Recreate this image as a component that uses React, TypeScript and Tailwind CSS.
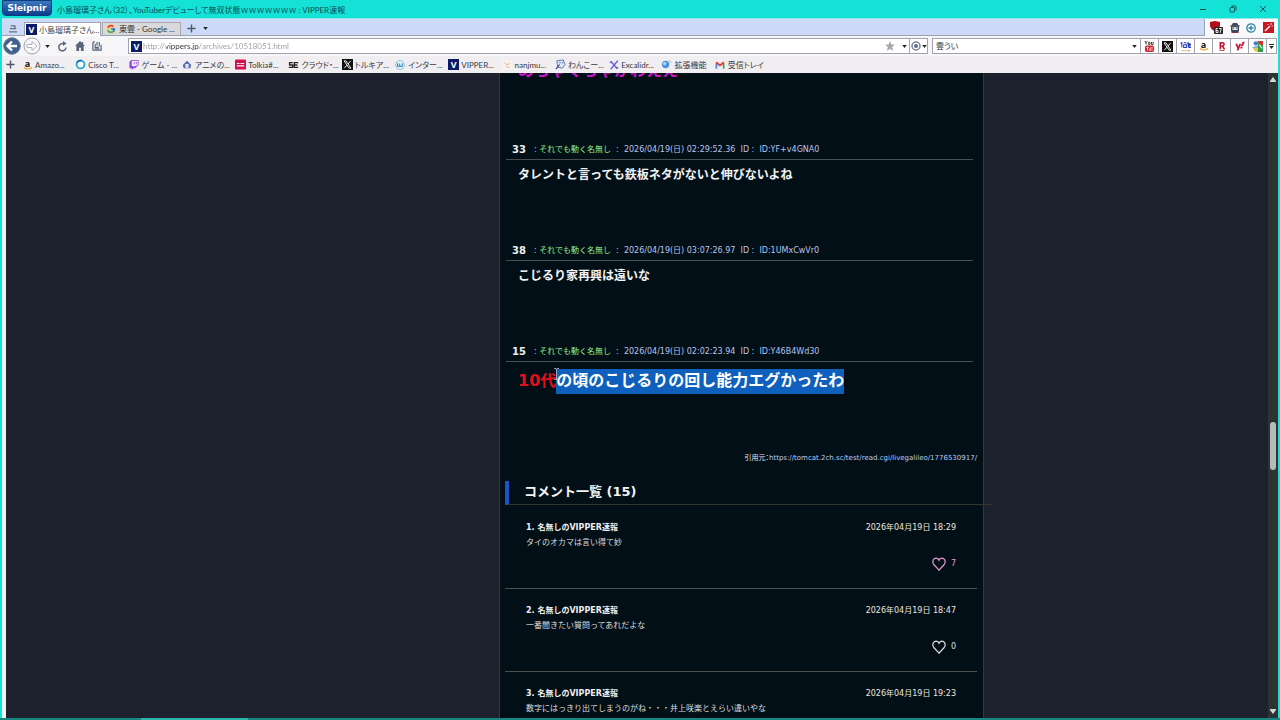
import React from "react";
import { FaTwitch, FaYahoo } from "react-icons/fa";
import { FcGoogle } from "react-icons/fc";

const Caret = () => (
  <svg viewBox="0 0 6 4" className="h-[3px] w-[5px] shrink-0" aria-hidden="true">
    <path d="M0 0h6L3 4z" fill="#222" />
  </svg>
);

const VIcon = ({ className = "" }: { className?: string }) => (
  <span
    aria-hidden="true"
    className={`flex size-[11px] shrink-0 items-center justify-center bg-[#0b1a66] font-['Noto_Sans'] text-[9px] leading-none font-bold text-white ${className}`}
  >
    V
  </span>
);

const XIcon = () => (
  <svg viewBox="0 0 12 12" className="size-[11px] shrink-0" aria-hidden="true">
    <rect width="12" height="12" fill="#111" />
    <path d="M2.3 2h2l5.4 8h-2z" fill="none" stroke="#fff" strokeWidth="1" />
    <path d="M9.5 2 6.6 5.4M5.5 6.7 2.5 10" stroke="#fff" strokeWidth="1" />
  </svg>
);

const AmazonIcon = () => (
  <span className="flex w-[10px] flex-col items-center font-['Open_Sans'] text-[9px] leading-[7px] font-bold text-[#111]" aria-hidden="true">
    a
    <svg viewBox="0 0 10 3" className="h-[3px] w-[10px]">
      <path d="M1 .5q4 3 8 0" fill="none" stroke="#f0a022" strokeWidth="1.2" />
    </svg>
  </span>
);

const PlusIcon = () => (
  <svg viewBox="0 0 10 10" className="size-[9px] shrink-0" aria-hidden="true">
    <path d="M5 .5v9M.5 5h9" stroke="#4c586b" strokeWidth="1.6" />
  </svg>
);

const bookmarks: { label: string; icon: React.ReactNode }[] = [
  { label: "Amazo...", icon: <AmazonIcon /> },
  {
    label: "Cisco T...",
    icon: (
      <svg viewBox="0 0 12 12" className="size-[11px]">
        <circle cx="6" cy="6" r="4.3" fill="#fff" stroke="#19a9d2" strokeWidth="1.9" />
        <path d="M2 4.2A4.4 4.4 0 0 1 7 1.8" fill="none" stroke="#1567b8" strokeWidth="1.8" />
      </svg>
    ),
  },
  { label: "ゲーム - ...", icon: <FaTwitch size={10} color="#8b43e6" /> },
  {
    label: "アニメの...",
    icon: (
      <svg viewBox="0 0 12 12" className="size-[10px]">
        <path d="M1 6 6 1l5 5-1 4H2z" fill="#4c68b7" />
        <circle cx="6" cy="7" r="2.6" fill="#e9eefc" />
        <path d="M4 7h1M7 7h1" stroke="#345" />
      </svg>
    ),
  },
  {
    label: "Tolkia#...",
    icon: (
      <svg viewBox="0 0 12 12" className="size-[11px]">
        <rect y=".5" width="12" height="11" rx="1" fill="#d5104f" />
        <path d="M2 5h3M6 5h4M2 7.5h8" stroke="#fff" strokeWidth="1.1" />
      </svg>
    ),
  },
  {
    label: "クラウド・...",
    icon: (
      <svg viewBox="0 0 14 10" className="h-[8px] w-[11px]">
        <path d="M6 2H2v3h4v3H1M13 2H8v6h5M8 5h4" fill="none" stroke="#262626" strokeWidth="1.7" />
      </svg>
    ),
  },
  { label: "トルキア...", icon: <XIcon /> },
  {
    label: "インター...",
    icon: (
      <svg viewBox="0 0 12 12" className="size-[10px]">
        <circle cx="6" cy="6" r="5.2" fill="#eaf5fb" stroke="#6fb4d8" />
        <path d="M3 4v3.6h2.6V4M5.8 7.6h2.9V4" fill="none" stroke="#1c7fb8" strokeWidth="1.2" />
      </svg>
    ),
  },
  { label: "VIPPER...", icon: <VIcon /> },
  {
    label: "nanjmu...",
    icon: (
      <svg viewBox="0 0 12 12" className="size-[10px]">
        <rect width="12" height="12" fill="#f8f1ec" />
        <path d="M3 3l3 3 3-2M5 8l4 1" fill="none" stroke="#e2a48c" />
      </svg>
    ),
  },
  {
    label: "わんこー...",
    icon: (
      <svg viewBox="0 0 12 12" className="size-[11px]">
        <path d="M2 2l7-1 2 5-3 4-5-1z" fill="#dce7f8" stroke="#5573ab" />
        <path d="M1 11l4-5M5 4h1M8 4h1" stroke="#29467f" strokeWidth="1.2" />
      </svg>
    ),
  },
  {
    label: "Excalidr...",
    icon: (
      <svg viewBox="0 0 12 12" className="size-[10px]">
        <path d="M2 1.5l8 9M10.5 1 2 11M1 3l3-1M8 10l3-1" stroke="#6a61d6" strokeWidth="1.7" />
      </svg>
    ),
  },
  {
    label: "拡張機能",
    icon: (
      <svg viewBox="0 0 12 12" className="size-[11px]">
        <circle cx="5" cy="6" r="4" fill="#4d93d9" />
        <circle cx="4" cy="5" r="1.8" fill="#b7dbf7" />
        <path d="M8 1.5q3 0 3 3" fill="none" stroke="#b8bcc4" />
      </svg>
    ),
  },
  {
    label: "受信トレイ",
    icon: (
      <svg viewBox="0 0 12 10" className="h-[8px] w-[10px]" fill="none" strokeWidth="2.2">
        <path d="M1.5 3v6.500" stroke="#4a80e8" />
        <path d="M10.500 3v6.500" stroke="#37a455" />
        <path d="M1.200 1.500 6 5.500l4.800-4" stroke="#dc3b30" />
      </svg>
    ),
  },
];

const searchEngines: { label: string; icon: React.ReactNode }[] = [
  {
    label: "YouTube",
    icon: (
      <svg viewBox="0 0 12 12" className="size-[11px]">
        <path d="M1 0l1.3 2.2V4M3.7 0 2.4 2M5 1.5h1.6v2.2H5zM8.2 1v2.8h1.8V1" fill="none" stroke="#222" strokeWidth=".9" />
        <rect x="1" y="5" width="10" height="7" rx="2" fill="#cf2b35" />
        <path d="M2.5 7H5M3.8 7v3.4M6.2 8v2.2h1.4V6.6M9 7.5h1M9 10h1.2" fill="none" stroke="#fff" strokeWidth=".8" />
      </svg>
    ),
  },
  { label: "X", icon: <XIcon /> },
  {
    label: "価格.com",
    icon: (
      <svg viewBox="0 0 12 12" className="size-[11px]">
        <path d="M2 1v6M.5 2.500h2M4 2h3M4 4h3v3H4zM9 1v6M7.500 3h4M10 4h2v3h-2z" fill="none" stroke="#203bb4" strokeWidth="1.1" />
        <path d="M2 10.500h2M5 10.500h2M8 10.500h3" stroke="#e5a860" strokeWidth="1.5" />
      </svg>
    ),
  },
  { label: "Amazon", icon: <AmazonIcon /> },
  {
    label: "楽天",
    icon: (
      <svg viewBox="0 0 12 12" className="size-[10px]">
        <path d="M4 10V2h2.500a2 2 0 0 1 0 4H4M6.500 6 9 10" fill="none" stroke="#c1122b" strokeWidth="1.9" />
        <path d="M3 11.500h6" stroke="#c1122b" />
      </svg>
    ),
  },
  { label: "Yahoo!", icon: <FaYahoo size={10} color="#cc1038" /> },
  {
    label: "Google マップ",
    icon: (
      <svg viewBox="0 0 12 12" className="size-[11px]">
        <path d="M6 0h6v12H6z" fill="#2b9c4c" />
        <path d="M7 0h5v5L7 3z" fill="#d8352f" />
        <circle cx="4" cy="2.500" r="2.300" fill="#3f7fc6" />
        <path d="M0 7l5-2 2 3-3 2z" fill="#78aee0" />
        <circle cx="4.500" cy="9.500" r="2.300" fill="#f0c436" />
        <path d="M8 4l3 4" stroke="#eef4f9" strokeWidth="1.200" />
      </svg>
    ),
  },
];

const posts = [
  { no: 33, time: "2026/04/19(日) 02:29:52.36", id: "YF+v4GNA0", body: "タレントと言っても鉄板ネタがないと伸びないよね" },
  { no: 38, time: "2026/04/19(日) 03:07:26.97", id: "1UMxCwVr0", body: "こじるり家再興は遠いな" },
];

const comments = [
  { no: 1, date: "2026年04月19日 18:29", body: "タイのオカマは言い得て妙", likes: 7 },
  { no: 2, date: "2026年04月19日 18:47", body: "一番聞きたい質問ってあれだよな", likes: 0 },
  { no: 3, date: "2026年04月19日 19:23", body: "数字にはっきり出てしまうのがね・・・井上咲楽とえらい違いやな", likes: null },
];

function PostHeader({ no, time, id }: { no: number; time: string; id: string }) {
  return (
    <header className="flex h-5 items-center border-b border-[#4a4d4f] pl-1.5 text-[8px] leading-[13px] whitespace-pre text-[#b9c4ec]">
      <b className="w-[22px] text-[10px] text-[#efefef]">{no}</b>
      <span>: </span>
      <span className="text-[#8ff08a]">それでも動く名無し</span>
      <span>{"  :  "}</span>
      <span>
        {time}
        {"  "}ID :{"  "}ID:{id}
      </span>
    </header>
  );
}

function TitleBar() {
  return (
    <div className="flex h-[18px] shrink-0 items-center">
      <button className="mb-0.5 h-4 w-[50px] rounded-b-sm border border-[#0c3c80] bg-linear-to-b from-[#3b78c0] to-[#0d3f8c] font-['DejaVu_Sans'] text-[9px] leading-[13px] font-bold text-white">
        Sleipnir
      </button>
      <h1 className="ml-[5px] flex-1 truncate pt-px text-[8px] text-[#0b4b52]">
        小島瑠璃子さん（32）、YouTuberデビューして無双状態ｗｗｗｗｗｗｗ : VIPPER速報
      </h1>
      <div className="flex w-[90px] items-center">
        <button aria-label="最小化" className="flex w-[30px] justify-center">
          <svg viewBox="0 0 8 8" className="size-2">
            <path d="M1 4.500h6" stroke="#154c50" />
          </svg>
        </button>
        <button aria-label="元に戻す" className="flex w-[30px] justify-center">
          <svg viewBox="0 0 8 8" className="size-2" fill="none" stroke="#154c50">
            <rect x="1" y="2.500" width="4.500" height="4.500" rx="1" />
            <path d="M2.500 1h3.300Q7 1 7 2.200v3.300" />
          </svg>
        </button>
        <button aria-label="閉じる" className="flex w-[30px] justify-center">
          <svg viewBox="0 0 8 8" className="size-2">
            <path d="M1 1l6 6M7 1 1 7" stroke="#154c50" />
          </svg>
        </button>
      </div>
    </div>
  );
}

function TabBar() {
  return (
    <div className="flex h-[18px] shrink-0 border-t border-[#8fe9e4] bg-[#ccdaf7]">
      <div className="flex flex-1 items-end border-r border-b border-[#9ba3b3]">
        <button aria-label="タブ一覧" className="flex h-[13px] w-[22px] items-center justify-center">
          <svg viewBox="0 0 12 10" className="h-[8px] w-[10px]">
            <path d="M3 1h6M2 4.500h8M1 8.500h10M9 1l-1 3" fill="none" stroke="#66707f" strokeWidth="1.500" />
          </svg>
        </button>
        <button className="-mb-px flex h-[14px] w-[77px] items-center gap-[2px] overflow-hidden border border-b-0 border-[#9ba3b3] bg-white pl-px text-[8px] whitespace-nowrap text-[#444]">
          <VIcon />
          小島瑠璃子さん...
        </button>
        <button className="ml-px flex h-[13px] w-[79px] items-center gap-[3px] border border-b-0 border-[#aaa] bg-[#d9d9db] pl-[3px] text-[8px] whitespace-nowrap text-[#333]">
          <FcGoogle size={10} className="shrink-0" />
          東雲 - Google ...
        </button>
        <button aria-label="新しいタブ" className="ml-[3px] flex h-[13px] w-[14px] items-center justify-center">
          <PlusIcon />
        </button>
        <button aria-label="タブメニュー" className="flex h-[13px] w-[14px] items-center justify-center">
          <Caret />
        </button>
      </div>
      <div className="flex w-[73px] items-center justify-between bg-[#f9f9fb] pr-1 pl-[5px]">
        <button aria-label="ブロッカー 67" className="size-[13px]">
          <svg viewBox="0 0 13 13">
            <path d="M0 1l5-1 5 1v4q-1 4-5 5-4-1-5-5z" fill="#b10e1c" />
            <rect x="4" y="6" width="9" height="7" rx="1" fill="#222" />
            <path d="M7.800 7.500H6v4h2v-2H6M9 7.500h2.300L10 12" fill="none" stroke="#fff" strokeWidth=".9" />
          </svg>
        </button>
        <button aria-label="拡張機能" className="size-[10px]">
          <svg viewBox="0 0 10 10">
            <path d="M3 0h4l2 3v5L7.500 10h-5L1 8V3z" fill="#3f4655" />
            <path d="M0 3h10" stroke="#596273" />
            <path d="M2.500 4h5v3h-5z" fill="#dfe8ee" />
            <path d="M3 5h1.200M5.800 5H7" stroke="#33465c" />
            <path d="M1.500 9.500h2M6.500 9.500h2" stroke="#b52a31" />
          </svg>
        </button>
        <button aria-label="追加" className="size-[10px]">
          <svg viewBox="0 0 10 10" fill="none" stroke="#2d83a8">
            <circle cx="5" cy="5" r="4.200" strokeWidth="1.300" />
            <path d="M5 2.500v5M2.500 5h5" strokeWidth="1.300" />
          </svg>
        </button>
        <button aria-label="マジック" className="size-[11px]">
          <svg viewBox="0 0 11 11">
            <rect width="11" height="11" fill="#c51820" />
            <path d="M2 9l5-5" stroke="#fff" strokeWidth="1.400" />
            <path d="M8 1v2M10 4H8.500M4.500 2.500h1" stroke="#fff" strokeWidth=".8" />
          </svg>
        </button>
      </div>
    </div>
  );
}

function AddressRow() {
  return (
    <div className="flex h-5 shrink-0 items-center bg-[#f6f6f9] pr-px">
      <nav className="flex w-[126px] items-center text-[#596579]">
        <button aria-label="戻る" className="ml-px size-[18px]">
          <svg viewBox="0 0 18 18">
            <circle cx="9" cy="9" r="8.300" fill="#41608f" stroke="#687891" />
            <path d="M14 9H5M9 4.500 4.500 9 9 13.500" fill="none" stroke="#fff" strokeWidth="2.400" />
          </svg>
        </button>
        <button aria-label="進む" className="ml-[2px] size-[18px]">
          <svg viewBox="0 0 18 18">
            <circle cx="9" cy="9" r="8" fill="#f7f7f9" stroke="#a0a4aa" />
            <path d="M4 7.500h5V4.500L14 9l-5 4.500v-3H4z" fill="#fff" stroke="#b0b3b8" />
          </svg>
        </button>
        <button aria-label="履歴" className="ml-px flex w-[10px] justify-center">
          <Caret />
        </button>
        <button aria-label="再読み込み" className="ml-[5px] size-[11px]">
          <svg viewBox="0 0 11 11" fill="none" stroke="currentColor" strokeWidth="1.500">
            <path d="M9 6.500A3.600 3.600 0 1 1 7 3" />
            <path d="M6 0v5L9.500 2.500z" fill="currentColor" stroke="none" />
          </svg>
        </button>
        <button aria-label="ホーム" className="ml-[7px] size-[10px]">
          <svg viewBox="0 0 11 11" fill="currentColor">
            <path d="M5.500 0 0 5.500h1.500V11h3V7.500h2V11h3V5.500H11L9 3.500V1H7.500v1z" />
          </svg>
        </button>
        <button aria-label="保存" className="ml-[7px] size-[10px]">
          <svg viewBox="0 0 11 11" fill="none" stroke="currentColor" strokeWidth="1.300">
            <path d="M1 1v9h9V4M1 1h2M3.500 3v4h4M5.500 1v4M8 1v5M3 8.500h5" />
          </svg>
        </button>
      </nav>
      <form className="flex h-4 flex-1 items-center border border-[#a3a3ad] bg-white" onSubmit={(e) => e.preventDefault()}>
        <VIcon className="ml-[2px]" />
        <input
          aria-label="アドレス"
          defaultValue="http://vippers.jp/archives/10518051.html"
          className="ml-px min-w-0 flex-1 bg-clip-text text-[8px] text-transparent outline-none [background-image:linear-gradient(to_right,#9a9aa2_23px,#333_23px,#333_56px,#9a9aa2_56px)]"
        />
        <button aria-label="お気に入り" className="mr-1 size-[10px]">
          <svg viewBox="0 0 12 12">
            <path d="M6 0l1.600 4.300L12 4.500 8.600 7.300 9.800 12 6 9.300 2.200 12l1.200-4.700L0 4.500l4.400-.2z" fill="#a6a6ad" />
          </svg>
        </button>
        <button aria-label="候補" className="flex w-[10px] justify-center">
          <Caret />
        </button>
        <button aria-label="エンジン切替" className="flex h-full w-[18px] items-center justify-center gap-px border-l border-[#a3a3ad]">
          <svg viewBox="0 0 10 10" className="size-[10px] shrink-0" fill="none">
            <circle cx="5" cy="5" r="4" stroke="#7b8293" strokeWidth="1.500" />
            <circle cx="5" cy="5" r="2" fill="#596d93" />
          </svg>
          <Caret />
        </button>
      </form>
      <form className="ml-1 flex h-4 w-[345px] items-center border border-[#a3a3ad] bg-white" onSubmit={(e) => e.preventDefault()}>
        <input aria-label="検索" defaultValue="雲うい" className="min-w-0 flex-1 pl-[3px] text-[8px] text-[#333] outline-none" />
        <button aria-label="検索履歴" className="flex w-[11px] justify-center">
          <Caret />
        </button>
        {searchEngines.map((e) => (
          <button key={e.label} type="button" aria-label={e.label} className="flex h-full w-[18px] items-center justify-center border-l border-[#a3a3ad]">
            {e.icon}
          </button>
        ))}
        <button aria-label="その他" className="flex h-full w-[10px] flex-col items-center justify-center gap-px border-l border-[#a3a3ad]">
          <span className="h-px w-[5px] bg-[#222]" />
          <Caret />
        </button>
      </form>
    </div>
  );
}

function BookmarkBar() {
  return (
    <nav className="flex h-[17px] shrink-0 items-center overflow-hidden bg-[#f0eef1] pl-1">
      <button aria-label="ブックマークを追加" className="w-4">
        <PlusIcon />
      </button>
      <ul className="grid w-[746px] grid-cols-14">
        {bookmarks.map((b) => (
          <li key={b.label}>
            <a href="#" className="flex items-center gap-[2px] text-[8px] leading-3 whitespace-nowrap text-[#3a3a3e]">
              <span aria-hidden="true" className="flex w-[11px] shrink-0 justify-center">
                {b.icon}
              </span>
              {b.label}
            </a>
          </li>
        ))}
      </ul>
    </nav>
  );
}

function Article() {
  return (
    <main className="border-x border-[#34383e] bg-[#020f17] px-1.5 font-['DejaVu_Sans','Noto_Sans_CJK_JP',sans-serif]">
      <section className="mr-1">
        <p className="-mt-[15px] mb-[57px] pl-3 text-[16px] leading-[25px] font-bold text-[#c716c7]">めちゃくちゃかわええ</p>
        {posts.map((p) => (
          <article key={p.no} className="h-[101px]">
            <PostHeader no={p.no} time={p.time} id={p.id} />
            <p className="mt-[5px] pl-3 text-[12px] leading-5 font-bold text-[#f3f3f3]">{p.body}</p>
          </article>
        ))}
        <article className="h-[109px]">
          <PostHeader no={15} time="2026/04/19(日) 02:02:23.94" id="Y46B4Wd30" />
          <p className="mt-[7px] flex pl-3 text-[16px] leading-[23px] font-bold whitespace-nowrap text-[#e0101c]">
            10代
            <span className="relative bg-[#0f5fbd] pb-0.5 text-white">
              の頃のこじるりの回し能力エグかったわ
              <svg viewBox="0 0 5 12" className="absolute -top-px -left-[2px] h-3 w-[5px]" aria-hidden="true">
                <path d="M0 .5h2l.5.5.5-.5h2M2.500 1v10M0 11.500h5" fill="none" stroke="#b8bcc2" strokeWidth=".8" />
              </svg>
            </span>
          </p>
        </article>
      </section>
      <p className="text-right text-[7px] leading-[14px] text-[#e5e5e5] [font-feature-settings:'palt']">
        引用元：
        <a href="#" className="text-[#b4cdfa]">
          https://tomcat.2ch.sc/test/read.cgi/livegalileo/1776530917/
        </a>
      </p>
      <h2 className="mt-4 -mr-[15px] -ml-px h-6 border-b border-l-4 border-b-[#34342f] border-l-[#1b55c4] pl-[15px] text-[13px] leading-[21px] font-bold text-[#f3f3f3]">
        コメント一覧 (15)
      </h2>
      <ol className="mt-px -ml-px">
        {comments.map((c) => (
          <li key={c.no} className="flex h-[83px] flex-col border-b border-[#4f4f4d] px-[21px] pt-[15px] text-[8px] text-[#dedede]">
            <div className="flex justify-between leading-[14px]">
              <b className="text-[#f0f0f0]">{c.no}. 名無しのVIPPER速報</b>
              <time className="text-[#efe6df]">{c.date}</time>
            </div>
            <p className="leading-[15px] whitespace-nowrap">{c.body}</p>
            {c.likes !== null && (
              <button className={`mt-[7px] flex items-center gap-[5px] self-end leading-[14px] ${c.likes ? "text-[#e89ad0]" : "text-[#dedede]"}`}>
                <svg viewBox="0 0 14 14" className="size-[14px]" fill="none" stroke="currentColor" strokeWidth="1.200" aria-hidden="true">
                  <path d="M7 13.200 1.800 7.500C.3 5.500.6 3 2.300 1.800 4 .6 6.200 1.200 7 3.200 7.800 1.200 10 .6 11.700 1.800c1.700 1.200 2 3.700.5 5.700z" />
                </svg>
                {c.likes}
              </button>
            )}
          </li>
        ))}
      </ol>
    </main>
  );
}

export default function App() {
  return (
    <div
      lang="ja"
      className="flex h-screen flex-col overflow-hidden bg-[#15e2d6] px-0.5 font-['Lato','Noto_Sans_CJK_JP',sans-serif] [font-feature-settings:'palt']"
    >
      <TitleBar />
      <TabBar />
      <AddressRow />
      <BookmarkBar />
      <div className="flex min-h-0 flex-1 bg-[#1c212d] [font-feature-settings:normal]">
        <div className="w-1 shrink-0 bg-[#f0f2f3]" />
        <div className="grid flex-1 grid-cols-[minmax(0,493fr)_485px_minmax(0,284fr)] overflow-hidden">
          <div />
          <Article />
          <div />
        </div>
        <div className="flex w-[10px] shrink-0 flex-col items-center bg-[#2c3334] py-1" aria-hidden="true">
          <svg viewBox="0 0 6 5" className="h-[5px] w-[6px]">
            <path d="M3 0l3 4v1H0V4z" fill="#d5d5d5" />
          </svg>
          <div className="grow-[341]" />
          <div className="h-12 w-1.5 rounded-full bg-[#b9b9b9]" />
          <div className="grow-[240]" />
          <svg viewBox="0 0 6 5" className="h-[5px] w-[6px]">
            <path d="M3 5l3-4V0H0v1z" fill="#d5d5d5" />
          </svg>
        </div>
      </div>
      <div className="-mx-0.5 flex h-0.5 shrink-0 bg-[#15877f]">
        <div className="w-[11%]" />
        <div className="w-[107px] bg-[#27b5aa]" />
      </div>
    </div>
  );
}
